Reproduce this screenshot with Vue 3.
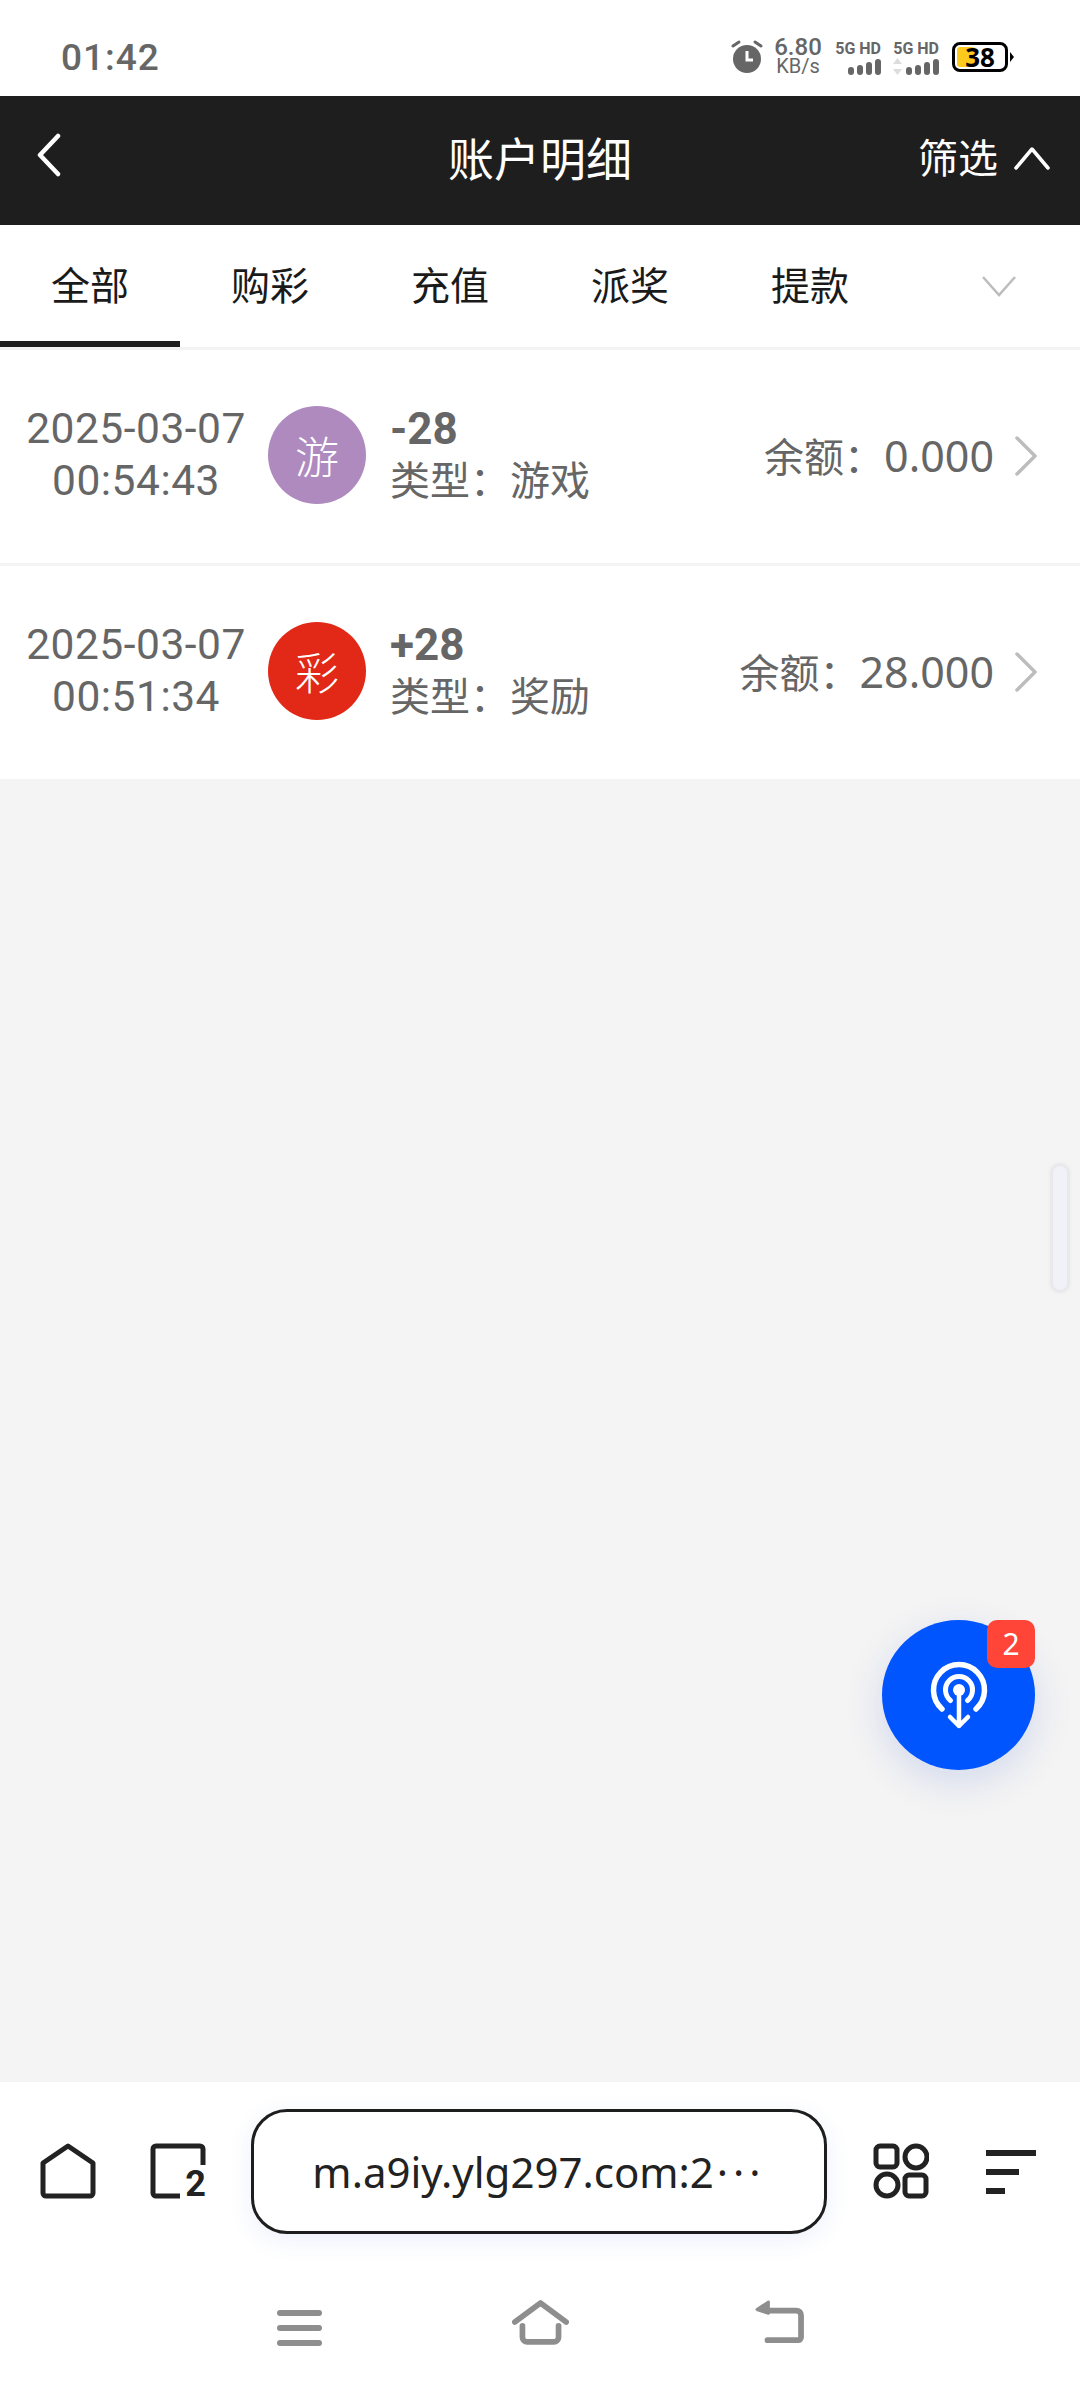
<script setup>
import { ref } from 'vue';

const tabs = ref(['全部', '购彩', '充值', '派奖', '提款']);
const records = ref([
  { date: '2025-03-07', time: '00:54:43', badge: '游', color: '#ae8abf', amount: '-28', type: '游戏', balance: '0.000' },
  { date: '2025-03-07', time: '00:51:34', badge: '彩', color: '#e22817', amount: '+28', type: '奖励', balance: '28.000' }
]);
</script>

<template>
  <div class="page">
    <div class="status">
      <span class="clock">01:42</span>
      <div class="status-right">
        <svg class="alarm" width="32" height="34" viewBox="0 0 32 34">
          <circle cx="16" cy="19" r="14" fill="#666" />
          <path d="M16 11v9h6" fill="none" stroke="#fff" stroke-width="3" />
          <path d="M2 6l6-4M30 6l-6-4" fill="none" stroke="#666" stroke-width="3" stroke-linecap="round" />
        </svg>
        <div class="speed">
          <span class="speed-num">6.80</span>
          <span class="speed-unit">KB/s</span>
        </div>
        <div class="net" v-for="n in 2" :key="n">
          <span class="net-label">5G HD</span>
          <div class="bars">
            <svg v-if="n == 2" width="11" height="17" viewBox="0 0 11 17">
              <path d="M5.500 0L10 6H1zM5.500 17L10 11H1z" fill="#ddd" />
            </svg>
            <i style="height: 8px"></i>
            <i style="height: 10px"></i>
            <i style="height: 13px"></i>
            <i style="height: 16px"></i>
          </div>
        </div>
        <div class="battery">
          <div class="battery-box"><span class="battery-fill"></span><b>38</b></div>
          <span class="battery-tip"></span>
        </div>
      </div>
    </div>

    <div class="head">
      <svg class="back" width="26" height="44" viewBox="0 0 26 44">
        <path d="M22 3L4 22l18 19" fill="none" stroke="#fff" stroke-width="4.500" stroke-linecap="round" stroke-linejoin="round" />
      </svg>
      <span class="title">账户明细</span>
      <div class="filter">
        <span>筛选</span>
        <svg width="36" height="24" viewBox="0 0 36 24">
          <path d="M2 22L18 3l16 19" fill="none" stroke="#fff" stroke-width="3.500" stroke-linecap="round" stroke-linejoin="round" />
        </svg>
      </div>
    </div>

    <div class="tabs">
      <div v-for="(tab, index) in tabs" :key="tab" class="tab" :class="{ active: index == 0 }">{{ tab }}</div>
      <svg class="more" width="36" height="22" viewBox="0 0 36 22">
        <path d="M2 2l16 18L34 2" fill="none" stroke="#bdbdbd" stroke-width="2.500" />
      </svg>
    </div>

    <div class="main">
      <div v-for="item in records" :key="item.time" class="row">
        <div class="when">
          <div>{{ item.date }}</div>
          <div>{{ item.time }}</div>
        </div>
        <div class="badge" :style="{ background: item.color }">{{ item.badge }}</div>
        <div class="info">
          <div class="amount">{{ item.amount }}</div>
          <div class="type">类型：{{ item.type }}</div>
        </div>
        <div class="balance">余额：<span class="balance-num">{{ item.balance }}</span></div>
        <svg class="arrow" width="24" height="40" viewBox="0 0 24 40">
          <path d="M3 2l18 18L3 38" fill="none" stroke="#bdbdbd" stroke-width="3.500" stroke-linecap="round" stroke-linejoin="round" />
        </svg>
      </div>

      <div class="scroll-thumb"></div>

      <div class="fab">
        <svg width="60" height="70" viewBox="0 0 60 70">
          <path d="M13 49A25.500 25.500 0 1 1 47 49" fill="none" stroke="#fff" stroke-width="5.500" stroke-linecap="round" />
          <path d="M21.500 40.500A13.500 13.500 0 1 1 38.500 40.500" fill="none" stroke="#fff" stroke-width="5" stroke-linecap="round" />
          <circle cx="30" cy="30" r="6" fill="#fff" />
          <path d="M30 30v36M21 57l9 9 9-9" fill="none" stroke="#fff" stroke-width="4.500" stroke-linecap="round" stroke-linejoin="round" />
        </svg>
        <span class="fab-count">2</span>
      </div>
    </div>

    <div class="toolbar">
      <svg class="tool-home" width="56" height="56" viewBox="0 0 56 56">
        <path d="M3 20L28 3l25 17v30a3 3 0 0 1-3 3H6a3 3 0 0 1-3-3z" fill="none" stroke="#222" stroke-width="5" stroke-linejoin="round" />
      </svg>
      <div class="tool-pages">
        <svg width="56" height="56" viewBox="0 0 56 56">
          <path d="M53 22V6a3 3 0 0 0-3-3H6a3 3 0 0 0-3 3v44a3 3 0 0 0 3 3h24" fill="none" stroke="#222" stroke-width="5" />
        </svg>
        <span class="pages-num">2</span>
      </div>
      <div class="url">m.a9iy.ylg297.com:2<span class="url-dots">···</span></div>
      <svg class="tool-grid" width="56" height="56" viewBox="0 0 56 56">
        <g fill="none" stroke="#222" stroke-width="5">
          <rect x="3" y="3" width="21" height="21" rx="4" />
          <circle cx="43" cy="14" r="11" />
          <circle cx="14" cy="42" r="11" />
          <rect x="32" y="32" width="21" height="21" rx="4" />
        </g>
      </svg>
      <div class="tool-menu">
        <i style="width: 50px"></i>
        <i style="width: 33px"></i>
        <i style="width: 19px"></i>
      </div>
    </div>

    <div class="nav">
      <div class="nav-menu"><i></i><i></i><i></i></div>
      <svg width="57" height="46" viewBox="0 0 60 48">
        <path d="M3 24L30 4l27 20" fill="none" stroke="#8e8e8e" stroke-width="6" stroke-linecap="round" stroke-linejoin="round" />
        <path d="M11 28v12a5 5 0 0 0 5 5h28a5 5 0 0 0 5-5V28" fill="none" stroke="#8e8e8e" stroke-width="6" stroke-linecap="round" />
      </svg>
      <svg class="nav-back" width="50" height="46" viewBox="0 0 52 48">
        <path d="M12 12h32a5 5 0 0 1 5 5v23a3 3 0 0 1-3 3H14" fill="none" stroke="#8e8e8e" stroke-width="6" stroke-linecap="round" stroke-linejoin="round" />
        <path d="M15 3L3 11l12 4z" fill="#8e8e8e" stroke="#8e8e8e" stroke-width="3" stroke-linejoin="round" />
      </svg>
    </div>
  </div>
</template>

<style scoped>
.page {
  width: 1080px;
  height: 2388px;
  display: flex;
  flex-direction: column;
  background: #fff;
  font-family: "Noto Sans", "Noto Sans CJK SC", sans-serif;
  overflow: hidden;
}
.status {
  height: 96px;
  flex: none;
  display: flex;
  align-items: center;
  justify-content: space-between;
  padding: 18px 66px 0 61px;
  box-sizing: border-box;
  color: #666;
}
.clock {
  font-family: Roboto, sans-serif;
  font-size: 37px;
  font-weight: 500;
  letter-spacing: 1px;
}
.status-right {
  display: flex;
  align-items: center;
}
.alarm {
  margin-right: 9px;
}
.speed {
  display: flex;
  flex-direction: column;
  align-items: center;
  width: 52px;
  margin-right: 9px;
  line-height: 19px;
  font-family: Roboto, sans-serif;
}
.speed-num {
  font-size: 24px;
  font-weight: 500;
}
.speed-unit {
  font-size: 20px;
}
.net {
  display: flex;
  flex-direction: column;
  align-items: flex-end;
  width: 48px;
  margin-right: 10px;
}
.net-label {
  font-family: Roboto, sans-serif;
  font-size: 16px;
  line-height: 18px;
  font-weight: 700;
  white-space: nowrap;
}
.bars {
  display: flex;
  align-items: flex-end;
  gap: 3px;
  height: 17px;
}
.bars i {
  width: 6px;
  background: #666;
  border-radius: 3px;
}
.battery {
  display: flex;
  align-items: center;
  margin-left: 3px;
}
.battery-box {
  position: relative;
  width: 56px;
  height: 30px;
  box-sizing: border-box;
  border: 3px solid #000;
  border-radius: 8px;
  display: flex;
  align-items: center;
  justify-content: center;
  color: #000;
  font-size: 26px;
}
.battery-box b {
  position: relative;
  line-height: 24px;
}
.battery-fill {
  position: absolute;
  left: 2px;
  top: 2px;
  bottom: 2px;
  width: 18px;
  border-radius: 3px;
  background: #fdc91c;
}
.battery-tip {
  width: 0;
  height: 0;
  margin-left: 2px;
  border-left: 4px solid #000;
  border-top: 5px solid transparent;
  border-bottom: 5px solid transparent;
}

.head {
  height: 129px;
  flex: none;
  position: relative;
  background: #1e1e1e;
  color: #fff;
  display: flex;
  align-items: center;
  justify-content: center;
}
.back {
  position: absolute;
  left: 36px;
  top: 37px;
}
.title {
  font-size: 46px;
  margin-top: -9px;
}
.filter {
  position: absolute;
  right: 30px;
  top: 32px;
  display: flex;
  align-items: center;
  gap: 16px;
  font-size: 40px;
  line-height: 60px;
}

.tabs {
  height: 125px;
  flex: none;
  display: flex;
  position: relative;
  box-sizing: border-box;
  border-bottom: 3px solid #f3f3f3;
}
.tab {
  width: 180px;
  height: 122px;
  box-sizing: border-box;
  display: flex;
  align-items: center;
  justify-content: center;
  font-size: 39px;
  color: #1a1a1a;
  border-bottom: 6px solid transparent;
}
.tab.active {
  border-bottom-color: #1e1e1e;
}
.more {
  position: absolute;
  left: 981px;
  top: 50px;
}

.main {
  flex: 1;
  position: relative;
  background: #f4f4f4;
}
.row {
  height: 213px;
  display: flex;
  align-items: center;
  background: #fff;
  padding: 0 42px 0 16px;
  margin-bottom: 3px;
  color: #666;
}
.when {
  width: 240px;
  text-align: center;
  font-family: Roboto, sans-serif;
  font-size: 42.500px;
  letter-spacing: 0.500px;
  line-height: 52px;
  margin-top: -3px;
}
.badge {
  width: 98px;
  height: 98px;
  margin: -3px 0 0 12px;
  border-radius: 50%;
  color: #fff;
  font-size: 44px;
  font-weight: 300;
  display: flex;
  align-items: center;
  justify-content: center;
}
.info {
  margin-left: 24px;
}
.amount {
  font-family: Roboto, sans-serif;
  font-size: 44px;
  font-weight: 700;
  line-height: 52px;
  margin-top: -5px;
}
.type {
  font-size: 40px;
  line-height: 50px;
}
.balance {
  margin-left: auto;
  font-size: 40px;
  margin-top: -3px;
}
.balance-num {
  font-size: 43px;
}
.arrow {
  margin-left: 20px;
  margin-top: -2px;
}
.scroll-thumb {
  position: absolute;
  left: 1050px;
  top: 813px;
  width: 20px;
  height: 130px;
  box-sizing: border-box;
  border: 3px solid #e9e9ec;
  border-radius: 10px;
  background: #f1f2f8;
  box-shadow: 0 0 0 2px #f1f1f1;
}
.fab {
  position: absolute;
  left: 882px;
  top: 1270px;
  width: 153px;
  height: 150px;
  border-radius: 50%;
  background: #0055ff;
  box-shadow: 0 12px 40px rgba(0, 60, 200, 0.14);
  display: flex;
  align-items: center;
  justify-content: center;
}
.fab-count {
  position: absolute;
  right: 0;
  top: 0;
  width: 48px;
  height: 48px;
  border-radius: 10px;
  background: #ff4438;
  color: #fff;
  font-size: 30px;
  line-height: 48px;
  text-align: center;
}

.toolbar {
  height: 199px;
  flex: none;
  position: relative;
  display: flex;
  align-items: flex-start;
  padding: 27px 0 0 40px;
  box-sizing: border-box;
  background: #fff;
}
.tool-home {
  margin-top: 34px;
}
.tool-pages {
  position: relative;
  width: 56px;
  height: 56px;
  margin: 34px 0 0 54px;
}
.pages-num {
  position: absolute;
  right: 0;
  bottom: -4px;
  font-family: Roboto, sans-serif;
  font-size: 36px;
  font-weight: 700;
  line-height: 38px;
  color: #222;
}
.url {
  width: 576px;
  height: 125px;
  margin-left: 45px;
  box-sizing: border-box;
  border: 3px solid #1e1e1e;
  border-radius: 36px;
  background: #fff;
  box-shadow: 0 6px 24px rgba(60, 90, 220, 0.09);
  display: flex;
  align-items: center;
  justify-content: center;
  font-size: 42px;
  color: #222;
  white-space: nowrap;
}
.url-dots {
  margin-left: 3px;
  letter-spacing: 5px;
}
.tool-grid {
  margin: 34px 0 0 46px;
}
.tool-menu {
  display: flex;
  flex-direction: column;
  gap: 13px;
  margin: 41px 0 0 57px;
}
.tool-menu i {
  display: block;
  height: 6px;
  background: #222;
}

.nav {
  flex: none;
  height: 107px;
  display: flex;
  align-items: flex-start;
  gap: 190px;
  padding: 18px 0 0 277px;
  box-sizing: border-box;
  background: #fff;
}
.nav-menu {
  width: 45px;
  display: flex;
  flex-direction: column;
  gap: 9px;
  padding-top: 11px;
}
.nav-menu i {
  display: block;
  height: 6px;
  border-radius: 3px;
  background: #8e8e8e;
}
.nav-back {
  margin-left: -5px;
}
</style>

<style>
html, body {
  margin: 0;
  background: #fff;
}
</style>
